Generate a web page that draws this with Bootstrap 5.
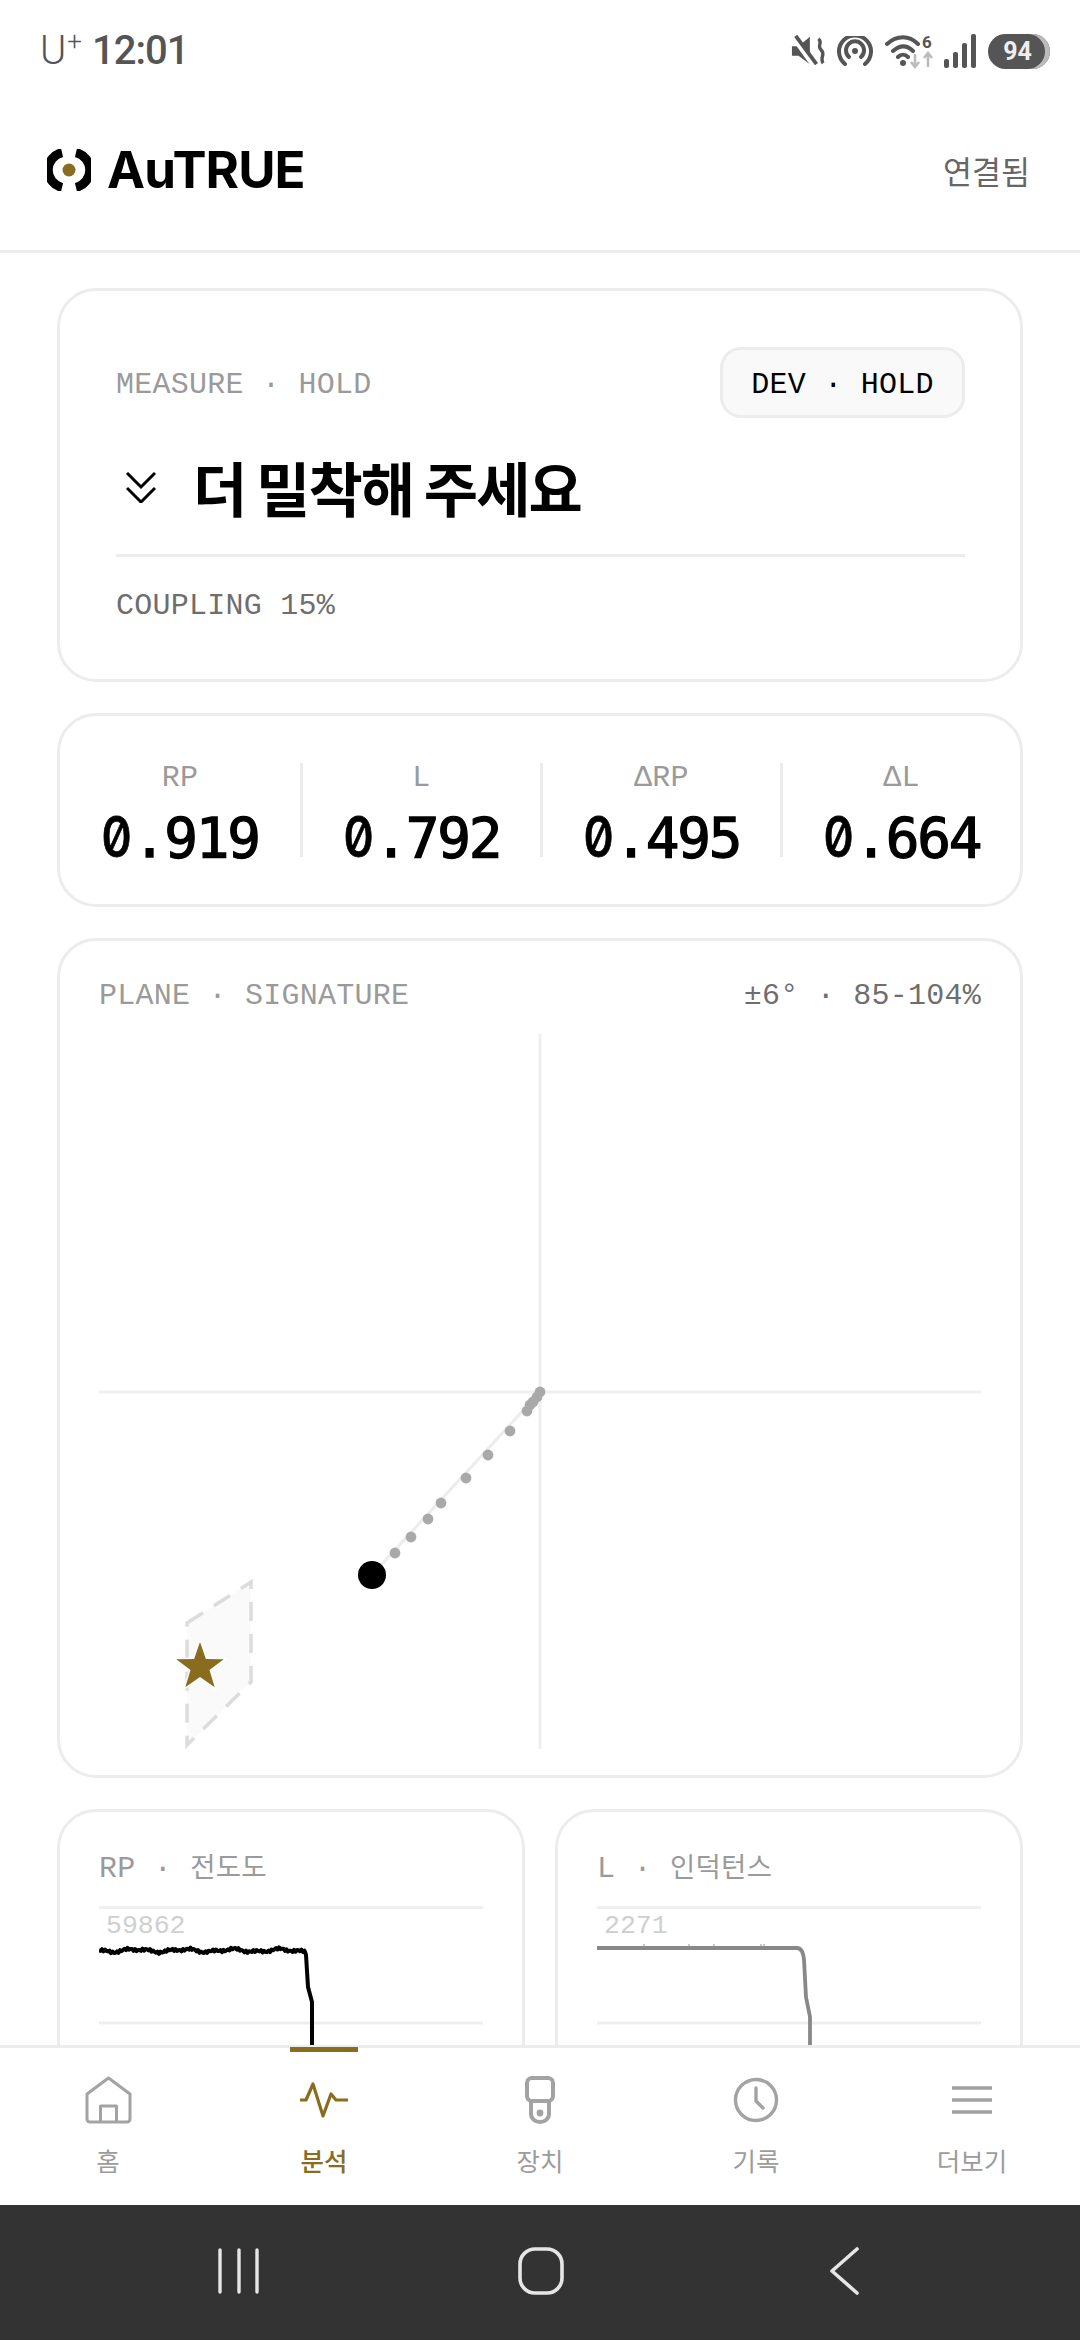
<!DOCTYPE html>
<html lang="ko">
<head>
  <meta charset="UTF-8" />
  <meta name="viewport" content="width=device-width, initial-scale=1.0" />
  <title>AuTRUE</title>
  <link href="https://cdn.jsdelivr.net/npm/bootstrap@5.3.3/dist/css/bootstrap.min.css" rel="stylesheet" />
  <style>
    body {
      width: 1080px;
      height: 2340px;
      background: #fff;
      color: #000;
      font-family: "Noto Sans CJK KR", "Noto Sans", sans-serif;
      overflow: hidden;
    }
    .mono {
      font-family: "Liberation Mono", "Noto Sans CJK KR", monospace;
      font-size: 30px;
      line-height: 36px;
      letter-spacing: .25px;
    }
    .tone-mid { color: #9a9a9a; }
    .tone-dark { color: #6e6e6e; }

    .status-bar { height: 90px; padding: 12px 30px 0 40px; color: #555; }
    .status-time { font-family: Roboto, sans-serif; font-size: 40px; font-weight: 500; line-height: 50px; letter-spacing: -1px; }
    .status-carrier { font-family: Roboto, sans-serif; font-size: 40px; font-weight: 300; margin-right: 10px; }
    .status-carrier sup { font-size: 26px; top: -14px; margin-left: 1px; }
    .status-batt { width: 62px; height: 35px; border-radius: 18px; background: #555; color: #eee; font: 700 25px/35px Roboto, sans-serif; text-align: center; padding-right: 3px; box-shadow: inset -5px 0 0 #bbb; }

    .top-head { height: 163px; padding: 0 50px 0 47px; border-bottom: 3px solid #ececec; }
    .brand-name { font-family: Inter, sans-serif; font-weight: 700; font-size: 51px; letter-spacing: -.9px; line-height: 60px; }
    .link-state { font-size: 31.5px; line-height: 40px; color: #666; }

    .content { padding: 35px 57px 0; gap: 31px; min-height: 0; overflow: hidden; }
    .panel { border: 3px solid #ececec; border-radius: 39px; background: #fff; flex-shrink: 0; }
    .panel-hold { height: 394px; padding: 56px 55px 0 56px; }
    .hold-kicker, .pill-dev { padding-top: 4px; }
    .pill-dev { height: 71px; width: 245px; border: 3px solid #ececec; border-radius: 21px; background: #f9f9f9; color: #000; }
    .hold-title { margin-top: 34px; height: 70px; padding-left: 10px; gap: 37px; }
    .hold-title h1 { margin: 0; font-size: 59px; line-height: 70px; font-weight: 700; letter-spacing: -1.9px; word-spacing: -4px; }
    .hold-rule { margin-top: 32px; border-top: 3px solid #ececec; padding-top: 31px; }

    .panel-nums { height: 194px; padding-top: 47px; }
    .num-cell { width: 241px; height: 94px; }
    .num-cell + .num-cell { border-left: 3px solid #ececec; }
    .num-label { line-height: 24px; padding-top: 3px; }
    .num-value { font-family: "DejaVu Sans Mono", monospace; font-size: 56px; line-height: 44px; letter-spacing: -2.2px; margin-top: 25px; -webkit-text-stroke: 1.3px #000; white-space: nowrap; }
    /* slashed zero comes from Inter, the mono face here has none */
    .zero-glyph { display: inline-block; width: 31.5px; font-family: Inter, sans-serif; font-weight: 500; letter-spacing: 0; font-feature-settings: "tnum", "zero"; -webkit-text-stroke: .8px #000; transform: scaleX(.86); transform-origin: left center; }

    .panel-plane { height: 840px; padding: 37px 39px 0; }
    .plane-plot { display: block; margin-top: 20px; }

    .pair { gap: 30px; }
    .panel-mini { width: 468px; height: 400px; padding: 36px 39px 0; }
    .mini-title { padding-top: 3px; height: 36px; }
    .mini-title span { font-size: 27.5px; }
    .mini-plot { display: block; margin-top: 21px; }
    .mini-plot text { font-family: "Liberation Mono", monospace; font-size: 26.5px; fill: #cfcfcf; }

    .bottom-tabs { height: 160px; border-top: 3px solid #ececec; background: #fff; position: relative; flex-shrink: 0; }
    .tab-item { width: 216px; color: #9c9c9c; font-size: 25.5px; line-height: 34px; }
    .tab-icon { height: 48px; margin-top: 28px; margin-bottom: 19px; }
    .tab-on { color: #8a6c1f; font-weight: 500; position: relative; }
    .tab-on::before { content: ""; position: absolute; top: -1px; left: 74px; width: 68px; height: 5px; background: #8a6c1f; }

    .sys-bar { height: 135px; background: #333; flex-shrink: 0; }
    .sys-bar svg { position: absolute; }
  </style>
</head>
<body class="d-flex flex-column">

<!-- status bar -->
<div class="status-bar d-flex align-items-center justify-content-between flex-shrink-0">
  <div class="d-flex align-items-center">
    <span class="status-carrier">U<sup>+</sup></span><span class="status-time">12:01</span>
  </div>
  <div class="d-flex align-items-center gap-2">
    <svg width="34" height="32" viewBox="0 0 36 32" fill="#555">
      <path d="M1 11H8L20 1V30L8 21H1Z"/>
      <path d="M1 -2L24 30" stroke="#fff" stroke-width="7"/>
      <path d="M5 0L27 30" stroke="#555" stroke-width="4"/>
      <path d="M29 3c5 4-2 8 3 12s-2 8 2 14" fill="none" stroke="#555" stroke-width="3.6"/>
    </svg>
    <svg width="36" height="30" viewBox="0 0 36 30" fill="none" stroke="#555" stroke-width="4" stroke-linecap="round" class="ms-1">
      <path d="M8 28a16 16 0 1 1 20 0"/>
      <path d="M12 21a9 9 0 1 1 12 0"/>
      <circle cx="18" cy="15" r="2" fill="#555" stroke-width="2"/>
    </svg>
    <svg width="50" height="36" viewBox="0 0 50 36" fill="none" class="ms-1">
      <path d="M2 11c10-9 22-9 31 0M8 18c7-6 14-6 20 0M13 24c3-3 7-3 10 0" stroke="#555" stroke-width="4" stroke-linecap="round"/>
      <circle cx="18" cy="30" r="3" fill="#555"/>
      <text x="37" y="15" font-family="Roboto, sans-serif" font-size="17" font-weight="700" fill="#555">6</text>
      <path d="M30 21v12m-4-4l4 5 4-5M43 34V21m-4 4l4-5 4 5" stroke="#bbb" stroke-width="2.6"/>
    </svg>
    <svg width="33" height="34" viewBox="0 0 33 34" fill="#555">
      <rect x="1" y="25" width="5" height="9" rx="2"/>
      <rect x="10" y="18" width="5" height="16" rx="2"/>
      <rect x="19" y="9" width="5" height="25" rx="2"/>
      <rect x="28" y="0" width="5" height="34" rx="2"/>
    </svg>
    <div class="status-batt ms-1">94</div>
  </div>
</div>

<!-- header -->
<header class="top-head d-flex align-items-center justify-content-between flex-shrink-0">
  <div class="d-flex align-items-center gap-3">
    <svg width="44" height="42" viewBox="0 0 44 42" fill="none">
      <path d="M15 3.5a18 18 0 0 0 0 35M29 3.5a18 18 0 0 1 0 35" stroke="#000" stroke-width="9"/>
      <circle cx="22" cy="21" r="6.5" fill="#8a6c1f"/>
    </svg>
    <span class="brand-name">AuTRUE</span>
  </div>
  <span class="link-state">연결됨</span>
</header>

<main class="content d-flex flex-column flex-grow-1">

  <section class="panel panel-hold">
    <div class="d-flex align-items-center justify-content-between">
      <span class="hold-kicker mono tone-mid">MEASURE · HOLD</span>
      <span class="pill-dev mono d-flex align-items-center justify-content-center">DEV · HOLD</span>
    </div>
    <div class="hold-title d-flex align-items-center">
      <svg width="30" height="31" viewBox="0 0 30 31" fill="none" stroke="#000" stroke-width="3">
        <path d="M1 1l14 14L29 1M1 16l14 14 14-14"/>
      </svg>
      <h1>더 밀착해 주세요</h1>
    </div>
    <div class="hold-rule mono tone-dark">COUPLING 15%</div>
  </section>

  <section class="panel panel-nums d-flex">
    <div class="num-cell d-flex flex-column align-items-center">
      <span class="num-label mono tone-mid">RP</span><span class="num-value"><span class="zero-glyph">0</span>.919</span>
    </div>
    <div class="num-cell d-flex flex-column align-items-center">
      <span class="num-label mono tone-mid">L</span><span class="num-value"><span class="zero-glyph">0</span>.792</span>
    </div>
    <div class="num-cell d-flex flex-column align-items-center">
      <span class="num-label mono tone-mid">ΔRP</span><span class="num-value"><span class="zero-glyph">0</span>.495</span>
    </div>
    <div class="num-cell d-flex flex-column align-items-center">
      <span class="num-label mono tone-mid">ΔL</span><span class="num-value"><span class="zero-glyph">0</span>.664</span>
    </div>
  </section>

  <section class="panel panel-plane">
    <div class="d-flex justify-content-between">
      <span class="mono tone-mid">PLANE · SIGNATURE</span>
      <span class="mono tone-dark">±6° · 85-104%</span>
    </div>
    <svg class="plane-plot" width="882" height="716" viewBox="99 1034 882 716">
      <path d="M540 1034V1749M99 1392H981" stroke="#efefef" stroke-width="3" fill="none"/>
      <path d="M187 1623L251 1582V1682L187 1745Z" fill="#fafafa" stroke="#dcdcdc" stroke-width="3.5" stroke-dasharray="19 13"/>
      <path d="M540 1392L372 1575" stroke="#ececec" stroke-width="3" fill="none"/>
      <g id="trail" fill="#a9a9a9"></g>
      <circle cx="372" cy="1575" r="14" fill="#000"/>
      <path id="star" d="" fill="#8a6c1f" stroke="#fff" stroke-width="3" paint-order="stroke"/>
    </svg>
  </section>

  <div class="pair d-flex">
    <section class="panel panel-mini">
      <div class="mono mini-title tone-mid">RP · <span>전도도</span></div>
      <svg class="mini-plot" width="384" height="200" viewBox="0 0 384 200">
        <path d="M0 2.5H384M0 118H384" stroke="#efefef" stroke-width="3"/>
        <text x="7" y="28">59862</text>
        <polyline id="rpTrace" fill="none" stroke="#000" stroke-width="4" stroke-linejoin="round"/>
      </svg>
    </section>
    <section class="panel panel-mini">
      <div class="mono mini-title tone-mid">L · <span>인덕턴스</span></div>
      <svg class="mini-plot" width="384" height="200" viewBox="0 0 384 200">
        <path d="M0 2.5H384M0 118H384" stroke="#efefef" stroke-width="3"/>
        <text x="7" y="28">2271</text>
        <path d="M47 39V41M92 39V41M117 39V41M164 39V41M167 39V41" stroke="#bbb" stroke-width="1.5"/>
        <path d="M0 43H200Q206 43 207 55L209 92 213 112V160" fill="none" stroke="#888" stroke-width="3.8"/>
      </svg>
    </section>
  </div>

</main>

<!-- bottom tabs -->
<nav class="bottom-tabs d-flex">
  <div class="tab-item d-flex flex-column align-items-center">
    <svg class="tab-icon" width="47" height="48" viewBox="0 0 47 48" fill="none" stroke="#a3a3a3" stroke-width="3" stroke-linejoin="round">
      <path d="M23.5 2L2 18V43a3 3 0 0 0 3 3H42a3 3 0 0 0 3-3V18Z"/>
      <path d="M15.5 46V30H31.5V46"/>
    </svg>
    <span>홈</span>
  </div>
  <div class="tab-item tab-on d-flex flex-column align-items-center">
    <svg class="tab-icon" width="48" height="48" viewBox="0 0 48 48" fill="none" stroke="#8a6c1f" stroke-width="3.2" stroke-linejoin="round">
      <path d="M0 24H6L13 8 23 40 31 18 36 24H48"/>
    </svg>
    <span>분석</span>
  </div>
  <div class="tab-item d-flex flex-column align-items-center">
    <svg class="tab-icon" width="30" height="48" viewBox="0 0 30 48" fill="none" stroke="#a3a3a3" stroke-width="4">
      <rect x="2" y="2" width="26" height="23" rx="5"/>
      <path d="M6 25V38a9 8 0 0 0 18 0V25"/>
      <circle cx="15" cy="37" r="3.4" fill="#a3a3a3" stroke="none"/>
    </svg>
    <span>장치</span>
  </div>
  <div class="tab-item d-flex flex-column align-items-center">
    <svg class="tab-icon" width="46" height="48" viewBox="0 0 46 48" fill="none" stroke="#a3a3a3" stroke-width="3.4">
      <circle cx="23" cy="24" r="20.5"/>
      <path d="M23 12V25L30 32" stroke-linecap="round"/>
    </svg>
    <span>기록</span>
  </div>
  <div class="tab-item d-flex flex-column align-items-center">
    <svg class="tab-icon" width="42" height="48" viewBox="0 0 42 48" fill="none" stroke="#a3a3a3" stroke-width="3.6">
      <path d="M1 12H41M1 24H41M1 36H41"/>
    </svg>
    <span>더보기</span>
  </div>
</nav>

<!-- android bar -->
<div class="sys-bar d-flex align-items-center position-relative">
  <svg style="left:216px;top:43px" width="46" height="46" viewBox="0 0 46 46" stroke="#e6e6e6" stroke-width="3.4" stroke-linecap="round">
    <path d="M4 2V44M23 2V44M41 2V44"/>
  </svg>
  <svg style="left:517px;top:41px" width="48" height="50" viewBox="0 0 48 50" fill="none" stroke="#e6e6e6" stroke-width="3.6">
    <rect x="3" y="3" width="42" height="44" rx="15"/>
  </svg>
  <svg style="left:828px;top:41px" width="32" height="50" viewBox="0 0 32 50" fill="none" stroke="#e6e6e6" stroke-width="3.6" stroke-linecap="round" stroke-linejoin="round">
    <path d="M29 3L4 25 29 47"/>
  </svg>
</div>

<script src="https://cdn.jsdelivr.net/npm/bootstrap@5.3.3/dist/js/bootstrap.bundle.min.js"></script>
<script>
// trail of the last readings, newest last
const trail = [[540,1392],[537,1397],[533,1402],[530,1405],[527,1411],[510,1431],[488,1455],[466,1478],[441,1503],[428,1519],[411,1537],[395,1553]];
document.getElementById('trail').innerHTML = trail
  .map(p => `<circle cx="${p[0]}" cy="${p[1]}" r="5.4"/>`).join('');

// target marker
const pts = [];
for (let i = 0; i < 10; i++) {
  const r = i % 2 ? 10 : 25;
  const a = -Math.PI / 2 + i * Math.PI / 5;
  pts.push((200 + r * Math.cos(a)).toFixed(1) + ' ' + (1667 + r * Math.sin(a)).toFixed(1));
}
document.getElementById('star').setAttribute('d', 'M' + pts.join('L') + 'Z');

// noisy RP trace
let trace = '';
for (let x = 0; x <= 206; x += 1.5) {
  const y = 45.5 + Math.sin(x * 1.7) * 1.1 + Math.sin(x * 3.9) * 1 + Math.sin(x * 0.13) * 1.2;
  trace += x + ',' + y.toFixed(1) + ' ';
}
document.getElementById('rpTrace').setAttribute('points', trace + '207,50 209,82 213,97 213,160');
</script>
</body>
</html>
